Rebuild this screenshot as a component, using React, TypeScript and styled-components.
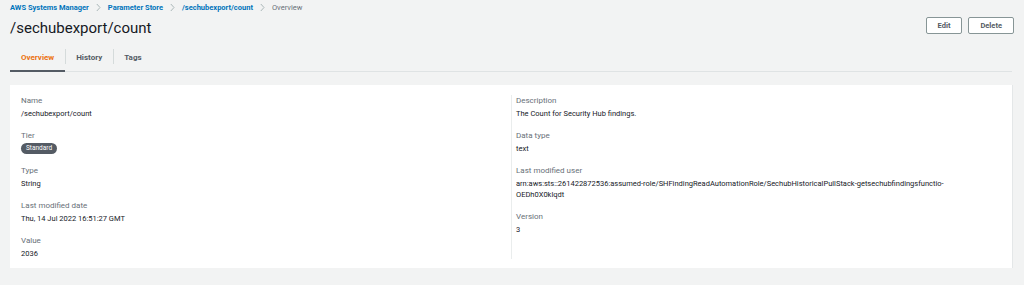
import styled, { createGlobalStyle } from "styled-components";

const GlobalStyle = createGlobalStyle`
  html, body {
    margin: 0;
    padding: 0;
    background: #f2f3f3;
    font-family: Roboto, "Liberation Sans", Arial, sans-serif;
    color: #16191f;
  }
`;

const Page = styled.div`
  padding: 0 12px 0 10px;
`;

const Breadcrumbs = styled.nav`
  display: flex;
  align-items: center;
  height: 14px;
  font-size: 7.5px;
`;

const Crumb = styled.a<{ $current?: boolean }>`
  color: ${({ $current }) => ($current ? "#687078" : "#0073bb")};
  font-weight: ${({ $current }) => ($current ? 400 : 700)};
  text-decoration: none;
`;

const Chevron = styled.span`
  display: flex;
  align-items: center;
  margin: 0 7px;
  color: #aab7b8;
`;

const HeaderRow = styled.div`
  display: flex;
  justify-content: space-between;
  align-items: flex-start;
  height: 30px;
`;

const Title = styled.h1`
  margin: 4px 0 0;
  font-size: 15px;
  font-weight: 400;
  line-height: 20px;
  color: #16191f;
`;

const Actions = styled.div`
  display: flex;
  gap: 6px;
  margin: 3px -2px 0 0;
`;

const Button = styled.button`
  height: 17px;
  padding: 0 11px;
  background: #ffffff;
  border: 1px solid #879596;
  border-radius: 2px;
  font-family: inherit;
  font-size: 7.5px;
  font-weight: 700;
  color: #545b64;
  cursor: pointer;
`;

const TabList = styled.div`
  display: flex;
  align-items: stretch;
  box-sizing: border-box;
  height: 28px;
  border-bottom: 1px solid #dfe3e4;
`;

const Tab = styled.div<{ $active?: boolean }>`
  position: relative;
  display: flex;
  align-items: center;
  padding: 0 11px;
  font-size: 8px;
  font-weight: 700;
  color: ${({ $active }) => ($active ? "#ec7211" : "#545b64")};
  border-bottom: 2px solid ${({ $active }) => ($active ? "#545b64" : "transparent")};
  margin-bottom: -1px;

  &:not(:first-child)::before {
    content: "";
    position: absolute;
    left: 0;
    top: 5px;
    bottom: 6px;
    border-left: 1px solid #d5dbdb;
  }
`;

const Card = styled.section`
  display: grid;
  grid-template-columns: 1fr 1fr;
  margin-top: 13px;
  padding: 10px 11px 9px;
  background: #ffffff;
  box-shadow: 0 1px 0 0 #b6bcbd, 1px 0 0 0 #e4e7e8, 1px 1px 0 0 #c6cbcc;
`;

const Column = styled.div<{ $divider?: boolean }>`
  display: flex;
  flex-direction: column;
  gap: 11px;
  padding: ${({ $divider }) => ($divider ? "0 20px 0 4px" : "0")};
  border-left: ${({ $divider }) => ($divider ? "1px solid #eaeded" : "none")};
`;

const Field = styled.div`
  display: flex;
  flex-direction: column;
  gap: 2px;
`;

const Label = styled.div`
  font-size: 8px;
  line-height: 11px;
  color: #687078;
`;

const Value = styled.div`
  font-size: 7.5px;
  line-height: 11px;
  color: #16191f;
  overflow-wrap: anywhere;
`;

const Badge = styled.span`
  align-self: flex-start;
  padding: 0 5px;
  height: 11px;
  line-height: 11px;
  border-radius: 6px;
  background: #545b64;
  color: #ffffff;
  font-size: 6.5px;
`;

const ChevronIcon = () => (
  <svg width="5" height="9" viewBox="0 0 5 9">
    <path d="M0.8 1 L4 4.5 L0.8 8" fill="none" stroke="currentColor" strokeWidth="1" />
  </svg>
);

export default function App() {
  return (
    <>
      <GlobalStyle />
      <Page>
        <Breadcrumbs>
          <Crumb>AWS Systems Manager</Crumb>
          <Chevron><ChevronIcon /></Chevron>
          <Crumb>Parameter Store</Crumb>
          <Chevron><ChevronIcon /></Chevron>
          <Crumb>/sechubexport/count</Crumb>
          <Chevron><ChevronIcon /></Chevron>
          <Crumb $current>Overview</Crumb>
        </Breadcrumbs>
        <HeaderRow>
          <Title>/sechubexport/count</Title>
          <Actions>
            <Button>Edit</Button>
            <Button>Delete</Button>
          </Actions>
        </HeaderRow>
        <TabList>
          <Tab $active>Overview</Tab>
          <Tab>History</Tab>
          <Tab>Tags</Tab>
        </TabList>
        <Card>
          <Column>
            <Field>
              <Label>Name</Label>
              <Value>/sechubexport/count</Value>
            </Field>
            <Field>
              <Label>Tier</Label>
              <Badge>Standard</Badge>
            </Field>
            <Field>
              <Label>Type</Label>
              <Value>String</Value>
            </Field>
            <Field>
              <Label>Last modified date</Label>
              <Value>Thu, 14 Jul 2022 16:51:27 GMT</Value>
            </Field>
            <Field>
              <Label>Value</Label>
              <Value>2036</Value>
            </Field>
          </Column>
          <Column $divider>
            <Field>
              <Label>Description</Label>
              <Value>The Count for Security Hub findings.</Value>
            </Field>
            <Field>
              <Label>Data type</Label>
              <Value>text</Value>
            </Field>
            <Field>
              <Label>Last modified user</Label>
              <Value>
                arn:aws:sts::261422872536:assumed-role/SHFindingReadAutomationRole/SechubHistoricalPullStack-getsechubfindingsfunctio-OEDh0X0klqdt
              </Value>
            </Field>
            <Field>
              <Label>Version</Label>
              <Value>3</Value>
            </Field>
          </Column>
        </Card>
      </Page>
    </>
  );
}
